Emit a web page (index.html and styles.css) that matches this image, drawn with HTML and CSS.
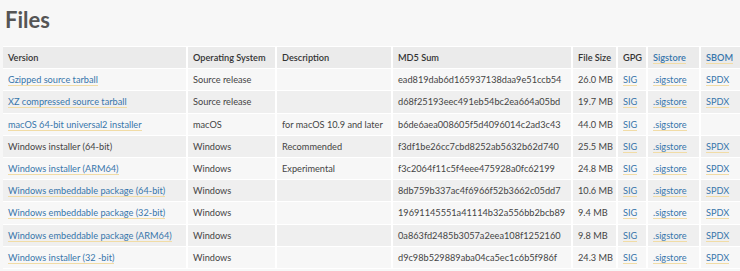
FILE: index.html
```html
<!DOCTYPE html>
<html>
<head>
<meta charset="utf-8">
<link rel="stylesheet" href="styles.css">
</head>
<body>
<div class="page">
  <h2 class="title">Files</h2>
  <table class="files">
    <colgroup>
      <col class="c-ver"><col class="c-os"><col class="c-desc"><col class="c-md5"><col class="c-size"><col class="c-gpg"><col class="c-sig"><col class="c-sbom">
    </colgroup>
    <thead>
      <tr><th>Version</th><th>Operating System</th><th>Description</th><th>MD5 Sum</th><th>File Size</th><th>GPG</th><th><a href="#">Sigstore</a></th><th><a href="#">SBOM</a></th></tr>
    </thead>
    <tbody>
      <tr><td><a href="#">Gzipped source tarball</a></td><td>Source release</td><td></td><td>ead819dab6d165937138daa9e51ccb54</td><td>26.0 MB</td><td><a href="#">SIG</a></td><td><a href="#">.sigstore</a></td><td><a href="#">SPDX</a></td></tr>
      <tr><td><a href="#">XZ compressed source tarball</a></td><td>Source release</td><td></td><td>d68f25193eec491eb54bc2ea664a05bd</td><td>19.7 MB</td><td><a href="#">SIG</a></td><td><a href="#">.sigstore</a></td><td><a href="#">SPDX</a></td></tr>
      <tr><td><a href="#">macOS 64-bit universal2 installer</a></td><td>macOS</td><td>for macOS 10.9 and later</td><td>b6de6aea008605f5d4096014c2ad3c43</td><td>44.0 MB</td><td><a href="#">SIG</a></td><td><a href="#">.sigstore</a></td><td></td></tr>
      <tr><td>Windows installer (64-bit)</td><td>Windows</td><td>Recommended</td><td>f3df1be26cc7cbd8252ab5632b62d740</td><td>25.5 MB</td><td><a href="#">SIG</a></td><td><a href="#">.sigstore</a></td><td><a href="#">SPDX</a></td></tr>
      <tr><td><a href="#">Windows installer (ARM64)</a></td><td>Windows</td><td>Experimental</td><td>f3c2064f11c5f4eee475928a0fc62199</td><td>24.8 MB</td><td><a href="#">SIG</a></td><td><a href="#">.sigstore</a></td><td><a href="#">SPDX</a></td></tr>
      <tr><td><a href="#">Windows embeddable package (64-bit)</a></td><td>Windows</td><td></td><td>8db759b337ac4f6966f52b3662c05dd7</td><td>10.6 MB</td><td><a href="#">SIG</a></td><td><a href="#">.sigstore</a></td><td><a href="#">SPDX</a></td></tr>
      <tr><td><a href="#">Windows embeddable package (32-bit)</a></td><td>Windows</td><td></td><td>19691145551a41114b32a556bb2bcb89</td><td>9.4 MB</td><td><a href="#">SIG</a></td><td><a href="#">.sigstore</a></td><td><a href="#">SPDX</a></td></tr>
      <tr><td><a href="#">Windows embeddable package (ARM64)</a></td><td>Windows</td><td></td><td>0a863fd2485b3057a2eea108f1252160</td><td>9.8 MB</td><td><a href="#">SIG</a></td><td><a href="#">.sigstore</a></td><td><a href="#">SPDX</a></td></tr>
      <tr><td><a href="#">Windows installer (32 -bit)</a></td><td>Windows</td><td></td><td>d9c98b529889aba04ca5ec1c6b5f986f</td><td>24.3 MB</td><td><a href="#">SIG</a></td><td><a href="#">.sigstore</a></td><td><a href="#">SPDX</a></td></tr>
    </tbody>
  </table>
</div>
</body>
</html>
```

FILE: styles.css
```css
html, body {
  margin: 0;
  padding: 0;
  background: #f7f7f7;
  overflow: hidden;
}
.page {
  padding: 0 0 0 3px;
  font-family: Lato, "Open Sans", sans-serif;
  color: #444;
}
.title {
  margin: 0;
  padding: 5px 0 0 2px;
  height: 46px;
  box-sizing: border-box;
  font-size: 22px;
  font-weight: 700;
  color: #555;
  line-height: 30px;
}
.files {
  border-collapse: collapse;
  table-layout: fixed;
  width: 742px;
  font-size: 9.2px;
}
.c-ver { width: 184px; }
.c-os { width: 89px; }
.c-desc { width: 116px; }
.c-md5 { width: 180px; }
.c-size { width: 45px; }
.c-gpg { width: 30px; }
.c-sig { width: 53px; }
.c-sbom { width: 45px; }
.files th, .files td {
  height: 22.2px;
  padding: 0 5px;
  text-align: left;
  white-space: nowrap;
  overflow: hidden;
  border: 1px solid #fff;
  border-width: 1px 2px 1px 0;
  box-sizing: border-box;
}
.files th {
  background: #ebebeb;
  font-weight: 600;
  color: #333;
}
.files tbody tr:nth-child(odd) td { background: #f7f7f7; }
.files tbody tr:nth-child(even) td { background: #efefef; }
.files a {
  color: #3776ab;
  text-decoration: none;
  border-bottom: 1px solid #f1dca6;
}
```
